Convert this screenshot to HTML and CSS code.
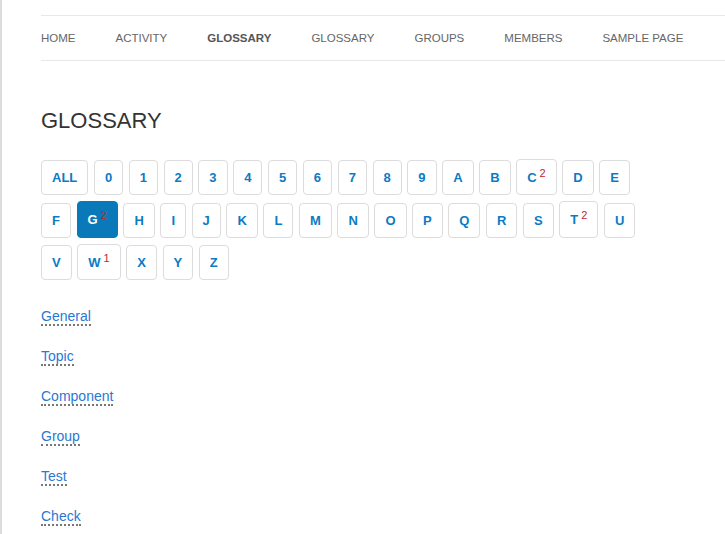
FILE: index.html
```html
<!DOCTYPE html>
<html>
<head>
<meta charset="utf-8">
<link rel="stylesheet" href="styles.css">
</head>
<body>
<div class="page">
  <nav class="nav">
    <a class="nav-item">HOME</a>
    <a class="nav-item">ACTIVITY</a>
    <a class="nav-item current">GLOSSARY</a>
    <a class="nav-item">GLOSSARY</a>
    <a class="nav-item">GROUPS</a>
    <a class="nav-item">MEMBERS</a>
    <a class="nav-item">SAMPLE PAGE</a>
  </nav>
  <h1 class="title">GLOSSARY</h1>
  <div class="letters">
    <a class="btn">ALL</a>
    <a class="btn">0</a>
    <a class="btn">1</a>
    <a class="btn">2</a>
    <a class="btn">3</a>
    <a class="btn">4</a>
    <a class="btn">5</a>
    <a class="btn">6</a>
    <a class="btn">7</a>
    <a class="btn">8</a>
    <a class="btn">9</a>
    <a class="btn">A</a>
    <a class="btn">B</a>
    <a class="btn">C<sup class="count">2</sup></a>
    <a class="btn">D</a>
    <a class="btn">E</a>
    <a class="btn">F</a>
    <a class="btn active">G<sup class="count">2</sup></a>
    <a class="btn">H</a>
    <a class="btn">I</a>
    <a class="btn">J</a>
    <a class="btn">K</a>
    <a class="btn">L</a>
    <a class="btn">M</a>
    <a class="btn">N</a>
    <a class="btn">O</a>
    <a class="btn">P</a>
    <a class="btn">Q</a>
    <a class="btn">R</a>
    <a class="btn">S</a>
    <a class="btn">T<sup class="count">2</sup></a>
    <a class="btn">U</a>
    <a class="btn">V</a>
    <a class="btn">W<sup class="count">1</sup></a>
    <a class="btn">X</a>
    <a class="btn">Y</a>
    <a class="btn">Z</a>
  </div>
  <ul class="terms">
    <li><a class="term">General</a></li>
    <li><a class="term">Topic</a></li>
    <li><a class="term">Component</a></li>
    <li><a class="term">Group</a></li>
    <li><a class="term">Test</a></li>
    <li><a class="term">Check</a></li>
  </ul>
</div>
</body>
</html>
```
FILE: styles.css
```css
html, body {
  margin: 0;
  padding: 0;
}
body {
  font-family: "Liberation Sans", Arial, sans-serif;
  background: #fff;
  border-left: 2px solid #dcdcdc;
  min-height: 534px;
  box-sizing: border-box;
  overflow: hidden;
}
.page {
  padding: 15px 0 0 39px;
}
.nav {
  display: flex;
  border-top: 1px solid #e8e8e8;
  border-bottom: 1px solid #e8e8e8;
  height: 44px;
  align-items: center;
  gap: 40px;
  white-space: nowrap;
}
.nav-item {
  font-size: 11.5px;
  color: #666;
  text-decoration: none;
}
.nav-item.current {
  font-weight: bold;
  color: #555;
}
.title {
  font-size: 22px;
  font-weight: normal;
  color: #333;
  margin: 47px 0 0 0;
  line-height: 26px;
}
.letters {
  display: flex;
  flex-wrap: wrap;
  align-items: baseline;
  gap: 6px 5.6px;
  margin-top: 25px;
  width: 600px;
}
.btn {
  display: inline-block;
  border: 1px solid #dcdcdc;
  border-radius: 4px;
  padding: 7px 10px;
  line-height: 19px;
  font-size: 13px;
  font-weight: bold;
  color: #0b7bc4;
  text-decoration: none;
}
.btn.active {
  background: #0a79b9;
  border-color: #0a79b9;
  color: #fff;
}
.count {
  font-size: 11px;
  font-weight: normal;
  color: #c0272d;
  margin-left: 3px;
  line-height: 12px;
}
.terms {
  list-style: none;
  margin: 27px 0 0 0;
  padding: 0;
}
.terms li {
  height: 40px;
}
.term {
  font-size: 14px;
  color: #2a78d2;
  text-decoration: none;
  border-bottom: 2px dotted #777;
  line-height: 16px;
}
```
